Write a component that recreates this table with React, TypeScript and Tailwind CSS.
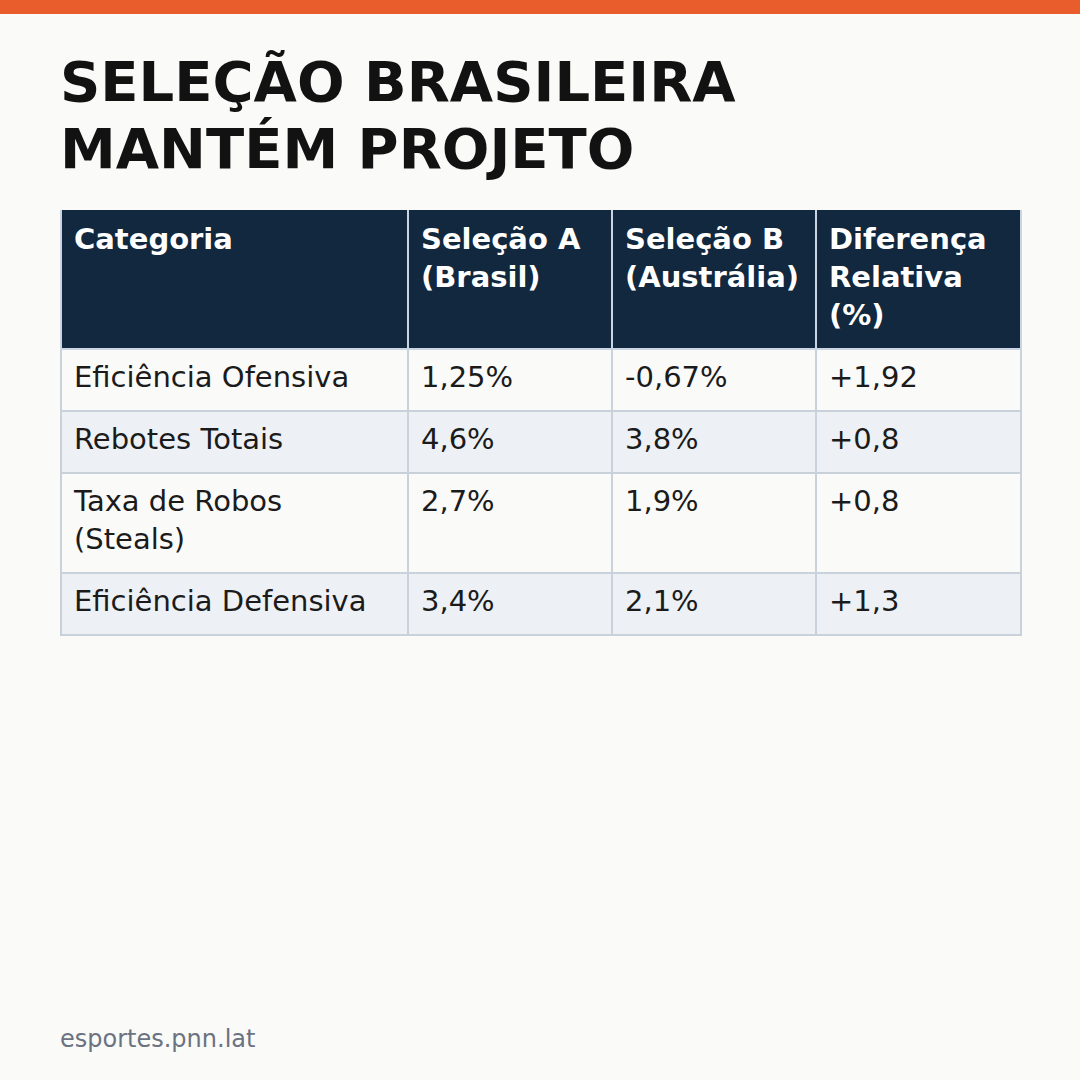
import React from "react";

const rows = [
  ["Eficiência Ofensiva", "1,25%", "-0,67%", "+1,92"],
  ["Rebotes Totais", "4,6%", "3,8%", "+0,8"],
  ["Taxa de Robos (Steals)", "2,7%", "1,9%", "+0,8"],
  ["Eficiência Defensiva", "3,4%", "2,1%", "+1,3"],
];

export default function App() {
  return (
    <div
      className="w-[1080px] h-[1080px] bg-[#fafaf8] flex flex-col overflow-hidden"
      style={{ fontFamily: '"DejaVu Sans", Verdana, sans-serif' }}
    >
      <div className="h-[14px] w-full bg-[#e95c2c] shrink-0" />
      <div className="px-[60px] pt-[34px] flex flex-col">
        <h1 className="text-[56px] leading-[1.2] font-bold text-[#121212] mb-[28px]">
          SELEÇÃO BRASILEIRA
          <br />
          MANTÉM PROJETO
        </h1>
        <table className="w-[960px] border-collapse table-fixed text-[29px] leading-[38px]">
          <colgroup>
            <col className="w-[347px]" />
            <col className="w-[204px]" />
            <col className="w-[204px]" />
            <col className="w-[205px]" />
          </colgroup>
          <thead>
            <tr className="bg-[#11283f] text-white">
              <th className="text-left align-top font-bold pl-[12px] pr-[6px] pt-[10px] pb-[14px] border-2 border-t-0 border-[#c9d5e2]">
                Categoria
              </th>
              <th className="text-left align-top font-bold pl-[12px] pr-[4px] pt-[10px] pb-[14px] border-2 border-t-0 border-[#c9d5e2]">
                Seleção A (Brasil)
              </th>
              <th className="text-left align-top font-bold pl-[12px] pr-[2px] pt-[10px] pb-[14px] border-2 border-t-0 border-[#c9d5e2]">
                Seleção B (Austrália)
              </th>
              <th className="text-left align-top font-bold pl-[12px] pr-[4px] pt-[10px] pb-[14px] border-2 border-t-0 border-[#c9d5e2]">
                Diferença Relativa (%)
              </th>
            </tr>
          </thead>
          <tbody>
            {rows.map((r, i) => (
              <tr key={i} className={i % 2 === 1 ? "bg-[#edf1f5]" : "bg-[#fafaf8]"}>
                {r.map((c, j) => (
                  <td
                    key={j}
                    className="text-left align-top text-[#1b1b1b] pl-[12px] pr-[6px] pt-[8px] pb-[14px] border-2 border-[#c9d1db]"
                  >
                    {j === 0 && c === "Taxa de Robos (Steals)" ? (
                      <>
                        Taxa de Robos
                        <br />
                        (Steals)
                      </>
                    ) : (
                      c
                    )}
                  </td>
                ))}
              </tr>
            ))}
          </tbody>
        </table>
      </div>
      <div className="mt-auto px-[60px] pb-[23px] text-[24px] leading-[36px] text-[#6b7280]">
        esportes.pnn.lat
      </div>
    </div>
  );
}
